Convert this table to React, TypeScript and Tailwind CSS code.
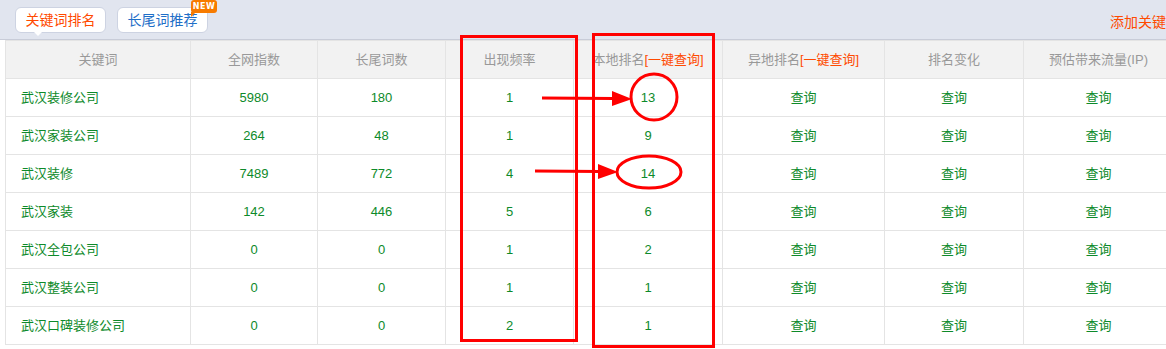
import React from 'react'

const COLS = [185, 127, 128, 128, 149, 162, 139, 150]

const ROWS = [
  { kw: '武汉装修公司', idx: '5980', tail: '180', freq: '1', local: '13' },
  { kw: '武汉家装公司', idx: '264', tail: '48', freq: '1', local: '9' },
  { kw: '武汉装修', idx: '7489', tail: '772', freq: '4', local: '14' },
  { kw: '武汉家装', idx: '142', tail: '446', freq: '5', local: '6' },
  { kw: '武汉全包公司', idx: '0', tail: '0', freq: '1', local: '2' },
  { kw: '武汉整装公司', idx: '0', tail: '0', freq: '1', local: '1' },
  { kw: '武汉口碑装修公司', idx: '0', tail: '0', freq: '2', local: '1' },
]

const font = { fontFamily: '"Liberation Sans", "Noto Sans CJK SC", sans-serif' }

function Annotations() {
  // red marks drawn over the table
  return (
    <svg className="absolute left-0 top-0 pointer-events-none" width={1166} height={349}>
      <g fill="none" stroke="#ff0000" strokeWidth={3}>
        <rect x={461.5} y={36.5} width={115} height={304} />
        <rect x={593.5} y={34.5} width={120} height={312} />
        <ellipse cx={654} cy={97} rx={23} ry={23} />
        <ellipse cx={649} cy={172} rx={32} ry={16} />
        <line x1={542} y1={98} x2={614} y2={98.5} />
        <line x1={535} y1={171} x2={600} y2={171.5} />
      </g>
      <g fill="#ff0000">
        <polygon points="612,91 632,99 612,106" />
        <polygon points="598,164 618,172 598,179" />
      </g>
    </svg>
  )
}

export default function App() {
  return (
    <div className="relative w-[1166px] h-[349px] overflow-hidden bg-white" style={font}>
      {/* top tabs */}
      <div className="w-[1190px] h-[40px] bg-[#e1e5ef] border-b border-[#c8ccd8] flex items-start pt-[7px] pl-[15px] pr-[10px]">
        <div className="relative">
          <div className="w-[91px] h-[26px] bg-white border border-[#cdd3e2] rounded-[6px] flex items-center justify-center text-[14px] text-[#ff4a00]">
            关键词排名
          </div>
          <div className="absolute left-[18px] top-[24px] w-0 h-0 border-l-[5px] border-r-[5px] border-t-[5px] border-l-transparent border-r-transparent border-t-white" />
        </div>
        <div className="relative ml-[11px]">
          <div className="w-[91px] h-[26px] bg-white border border-[#cdd3e2] rounded-[6px] flex items-center justify-center text-[14px] text-[#1f6fc8]">
            长尾词推荐
          </div>
          <div className="absolute left-[74px] top-[-7px] w-[26px] h-[13px] bg-[#f77b00] rounded-[3px] flex items-center justify-center text-[8px] font-bold leading-none text-white tracking-[0.5px]" style={{ fontFamily: '"DejaVu Sans", sans-serif' }}>
            NEW
          </div>
          <div className="absolute left-[74px] top-[5px] w-0 h-0 border-r-[5px] border-t-[5px] border-r-transparent border-t-[#f77b00]" />
        </div>
        <div className="ml-auto mt-[5px] text-[14px] text-[#ff4a00] whitespace-nowrap">添加关键词</div>
      </div>

      {/* table */}
      <table className="ml-[5px] border-collapse table-fixed text-[13px]" style={{ width: 1168 }}>
        <colgroup>
          {COLS.map((w, i) => (
            <col key={i} style={{ width: w }} />
          ))}
        </colgroup>
        <thead>
          <tr className="h-[38px] bg-[#f2f2f2] text-[#999999]">
            <th className="font-normal border border-[#e4e4e4]">关键词</th>
            <th className="font-normal border border-[#e4e4e4]">全网指数</th>
            <th className="font-normal border border-[#e4e4e4]">长尾词数</th>
            <th className="font-normal border border-[#e4e4e4]">出现频率</th>
            <th className="font-normal border border-[#e4e4e4] whitespace-nowrap">
              本地排名<span className="text-[#ff4a00]">[一键查询]</span>
            </th>
            <th className="font-normal border border-[#e4e4e4] whitespace-nowrap">
              异地排名<span className="text-[#ff4a00]">[一键查询]</span>
            </th>
            <th className="font-normal border border-[#e4e4e4]">排名变化</th>
            <th className="font-normal border border-[#e4e4e4] whitespace-nowrap">预估带来流量(IP)</th>
          </tr>
        </thead>
        <tbody className="text-[#0d8a2a]">
          {ROWS.map(r => (
            <tr key={r.kw} className="h-[38px]">
              <td className="border border-[#e4e4e4] pl-[15px]">{r.kw}</td>
              <td className="border border-[#e4e4e4] text-center">{r.idx}</td>
              <td className="border border-[#e4e4e4] text-center">{r.tail}</td>
              <td className="border border-[#e4e4e4] text-center">{r.freq}</td>
              <td className="border border-[#e4e4e4] text-center">{r.local}</td>
              <td className="border border-[#e4e4e4] text-center">查询</td>
              <td className="border border-[#e4e4e4] text-center">查询</td>
              <td className="border border-[#e4e4e4] text-center">查询</td>
            </tr>
          ))}
        </tbody>
      </table>

      <Annotations />
    </div>
  )
}
